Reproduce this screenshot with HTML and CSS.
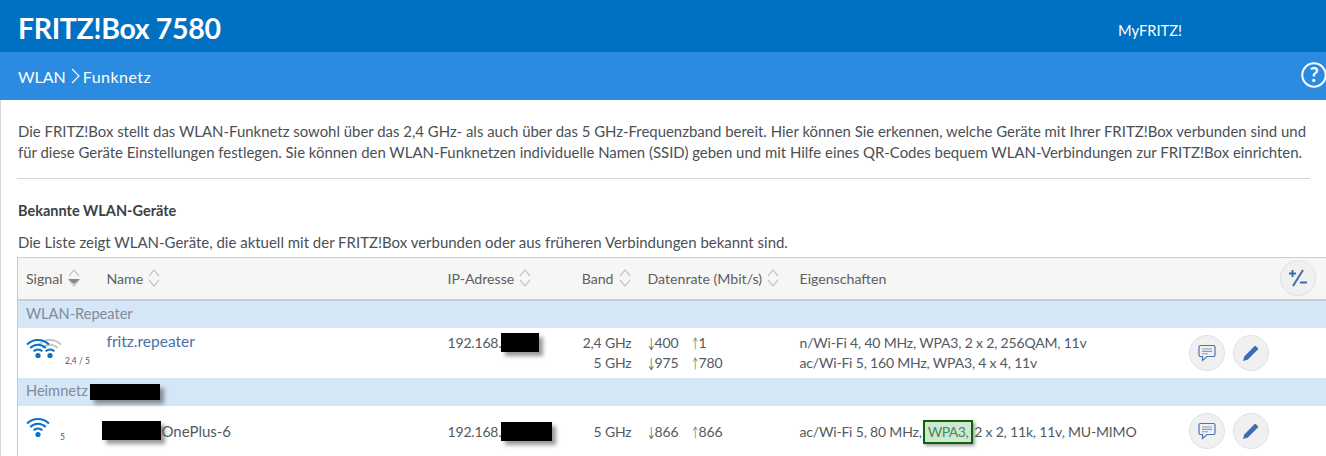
FILE: index.html
```html
<!DOCTYPE html>
<html lang="de">
<head>
<meta charset="utf-8">
<title>FRITZ!Box 7580</title>
<link rel="stylesheet" href="styles.css">
</head>
<body>
<svg class="defs" width="0" height="0" aria-hidden="true">
  <symbol id="wifi" viewBox="0 0 24 22">
    <path d="M1 7.5a15.5 15.5 0 0 1 22 0" fill="none" stroke="#0a70c8" stroke-width="2"/>
    <path d="M4.2 11a11 11 0 0 1 15.6 0" fill="none" stroke="#0a70c8" stroke-width="2"/>
    <path d="M7.6 14.4a6.2 6.2 0 0 1 8.8 0" fill="none" stroke="#0a70c8" stroke-width="2"/>
    <circle cx="12" cy="18.5" r="2.6" fill="#0a70c8"/>
  </symbol>
  <symbol id="wifi-low" viewBox="0 0 24 22">
    <path d="M1 7.5a15.5 15.5 0 0 1 22 0" fill="none" stroke="#c4c9cc" stroke-width="2"/>
    <path d="M4.2 11a11 11 0 0 1 15.6 0" fill="none" stroke="#c4c9cc" stroke-width="2"/>
    <path d="M7.6 14.4a6.2 6.2 0 0 1 8.8 0" fill="none" stroke="#0a70c8" stroke-width="2"/>
    <circle cx="12" cy="18.5" r="2.6" fill="#0a70c8"/>
  </symbol>
  <symbol id="sort" viewBox="0 0 14 20">
    <path d="M2 8l5-6 5 6M2 12l5 6 5-6" fill="none" stroke="#b4b8ba" stroke-width="1.1"/>
  </symbol>
  <symbol id="chat" viewBox="0 0 18 18">
    <path d="M2.5 1.5h13A1.5 1.5 0 0 1 17 3v8a1.5 1.5 0 0 1-1.5 1.5H9L4.5 16.5v-4h-2A1.5 1.5 0 0 1 1 11V3a1.5 1.5 0 0 1 1.5-1.5z" fill="none" stroke="#4a76b4" stroke-width="1.2"/>
    <path d="M4 5h10M4 7.4h10M4 9.8h6" stroke="#7f9fcb" stroke-width="1.1"/>
  </symbol>
  <symbol id="pen" viewBox="0 0 18 18">
    <path d="M1 17l1.3-4.6L12.6 2.1a.8.8 0 0 1 1.1 0l2.2 2.2a.8.8 0 0 1 0 1.1L5.6 15.7z" fill="#3f6cae"/>
  </symbol>
</svg>
<header class="top">
  <div class="brand">FRITZ!Box 7580</div>
  <a class="myfritz">MyFRITZ!</a>
</header>
<nav class="crumbs">
  <span class="crumb-text">WLAN</span>
  <svg class="crumb-sep" viewBox="0 0 9 16" width="9" height="16"><path d="M1 1l7 7-7 7" fill="none" stroke="#fff" stroke-width="1.1"/></svg>
  <span class="crumb-text crumb-page">Funknetz</span>
  <svg class="help" viewBox="0 0 26 26" width="26" height="26"><circle cx="13" cy="13" r="11.7" fill="none" stroke="#fff" stroke-width="2"/><text x="13" y="19.5" text-anchor="middle" class="help-q">?</text></svg>
</nav>
<main class="content">
  <p class="intro">Die FRITZ!Box stellt das WLAN-Funknetz sowohl über das 2,4 GHz- als auch über das 5 GHz-Frequenzband bereit. Hier können Sie erkennen, welche Geräte mit Ihrer FRITZ!Box verbunden sind und für diese Geräte Einstellungen festlegen. Sie können den WLAN-Funknetzen individuelle Namen (SSID) geben und mit Hilfe eines QR-Codes bequem WLAN-Verbindungen zur FRITZ!Box einrichten.</p>
  <hr class="rule">
  <h2 class="section-title">Bekannte WLAN-Geräte</h2>
  <p class="section-text">Die Liste zeigt WLAN-Geräte, die aktuell mit der FRITZ!Box verbunden oder aus früheren Verbindungen bekannt sind.</p>
  <table class="devices">
    <colgroup>
      <col class="c-signal"><col class="c-name"><col class="c-ip"><col class="c-band"><col class="c-rate"><col class="c-props"><col class="c-act">
    </colgroup>
    <thead>
      <tr>
        <th><span class="th-in">Signal <span class="sort-active"><svg width="14" height="20"><use href="#sort"/></svg></span></span></th>
        <th><span class="th-in">Name <svg width="14" height="20"><use href="#sort"/></svg></span></th>
        <th><span class="th-in">IP-Adresse <svg width="14" height="20"><use href="#sort"/></svg></span></th>
        <th class="right"><span class="th-in">Band <svg width="14" height="20"><use href="#sort"/></svg></span></th>
        <th><span class="th-in">Datenrate (Mbit/s) <svg width="14" height="20"><use href="#sort"/></svg></span></th>
        <th>Eigenschaften</th>
        <th class="act-head"><button class="round" aria-label="Mehr"><svg viewBox="0 0 20 20" width="20" height="20"><path d="M1 5.5h7M4.5 2v7M15 2L5 18M12 14.5h7" fill="none" stroke="#3f6cae" stroke-width="2"/></svg></button></th>
      </tr>
    </thead>
    <tbody>
      <tr class="group"><td colspan="7">WLAN-Repeater</td></tr>
      <tr class="dev">
        <td class="sig"><span class="sig-in"><svg class="w2" width="24" height="22"><use href="#wifi-low"/></svg><svg class="w1" width="24" height="22"><use href="#wifi"/></svg><small class="sig-num">2,4 / 5</small></span></td>
        <td class="name"><a>fritz.repeater</a></td>
        <td>192.168.<i class="redact r1"></i></td>
        <td class="right">2,4 GHz<br>5 GHz</td>
        <td><span class="rate"><span class="r-d"><b>↓</b>400</span><span><em>↑</em>1</span></span><span class="rate"><span class="r-d"><b>↓</b>975</span><span><em>↑</em>780</span></span></td>
        <td>n/Wi-Fi 4, 40 MHz, WPA3, 2 x 2, 256QAM, 11v<br>ac/Wi-Fi 5, 160 MHz, WPA3, 4 x 4, 11v</td>
        <td class="acts"><span class="act-in"><button class="round" aria-label="Nachricht"><svg width="18" height="18"><use href="#chat"/></svg></button><button class="round" aria-label="Bearbeiten"><svg width="18" height="18"><use href="#pen"/></svg></button></span></td>
      </tr>
      <tr class="group"><td colspan="7">Heimnetz <i class="redact r2"></i></td></tr>
      <tr class="dev mid">
        <td class="sig"><span class="sig-in one"><svg class="w1" width="24" height="22"><use href="#wifi"/></svg><small class="sig-num">5</small></span></td>
        <td class="name plain"><i class="redact r3"></i>OnePlus-6</td>
        <td>192.168.<i class="redact r4"></i></td>
        <td class="right">5 GHz</td>
        <td><span class="rate"><span class="r-d"><b>↓</b>866</span><span><em>↑</em>866</span></span></td>
        <td>ac/Wi-Fi 5, 80 MHz,<mark class="hl">WPA3,</mark>2 x 2, 11k, 11v, MU-MIMO</td>
        <td class="acts"><span class="act-in"><button class="round" aria-label="Nachricht"><svg width="18" height="18"><use href="#chat"/></svg></button><button class="round" aria-label="Bearbeiten"><svg width="18" height="18"><use href="#pen"/></svg></button></span></td>
      </tr>
    </tbody>
  </table>
</main>
</body>
</html>
```
FILE: styles.css
```css
* { box-sizing: border-box; }
html, body { margin: 0; height: 456px; overflow: hidden; background: #fff; }
body { font-family: "Lato", "Liberation Sans", sans-serif; font-size: 15px; color: #4a4f55; }
.defs { position: absolute; }
.top { height: 52px; background: #0070c2; color: #fff; display: flex; align-items: center; justify-content: space-between; padding: 0 144px 0 18px; }
.brand { font-size: 28.5px; font-weight: 700; letter-spacing: -0.35px; padding-top: 4px; }
.myfritz { font-size: 14.7px; padding-top: 8px; }
.crumbs { height: 48px; background: #2b8be0; color: #fff; display: flex; align-items: center; padding: 0 0 0 18px; font-size: 16px; }
.crumb-sep { margin: 0 3px 0 5px; }
.crumb-page { letter-spacing: .45px; }
.help { margin: -2px -1px 0 auto; }
.help-q { font: 700 20px "Lato", sans-serif; fill: #fff; }
.content { padding: 0 0 0 16px; border-left: 1px solid #d8d8d2; height: 356px; overflow: hidden; }
.intro { margin: 0; padding: 21px 0 0 1px; font-size: 14.93px; line-height: 21px; width: 1296px; }
.rule { margin: 15px 0 0 0; border: 0; border-top: 1px solid #d4d4d4; width: 1293px; }
.section-title { margin: 23px 0 0 1px; font-size: 14.5px; line-height: 18px; font-weight: 700; color: #3c4045; }
.section-text { margin: 12px 0 0 1px; font-size: 14.97px; line-height: 20px; }
.devices { margin-top: 5px; width: 1309px; border-collapse: collapse; table-layout: fixed; border-right: 1px solid #c5d3df; border-left: 1px solid #b9cad9; font-size: 14px; letter-spacing: -0.18px; }
.c-signal { width: 80px; } .c-name { width: 342px; } .c-ip { width: 120px; } .c-band { width: 72px; } .c-rate { width: 152px; } .c-props { width: 385px; } .c-act { width: 158px; }
thead tr { height: 42px; background: #f6f6f4; border-top: 1px solid #c8ced2; border-bottom: 2px solid #c1d0dc; }
th { text-align: left; font-weight: 400; color: #5b6066; padding: 0 0 0 8px; vertical-align: middle; font-size: 14.15px; letter-spacing: 0; white-space: nowrap; }
.th-in { display: inline-flex; align-items: center; gap: 4px; }
th.right, td.right { text-align: right; padding-right: 0; }
th:nth-child(2), td:nth-child(2) { padding-left: 9px; }
th:nth-child(5), td:nth-child(5) { padding-left: 16px; }
th:nth-child(6), td:nth-child(6) { padding-left: 16px; }
.sort-active { display: inline-flex; position: relative; }
.sort-active::after { content: ""; position: absolute; left: 1px; top: 11px; width: 0; height: 0; border: 6px solid transparent; border-top: 5px solid #82878b; }
.act-head { text-align: right; padding: 0 10px 0 0; }
.group td { height: 28px; background: #d5e6f6; color: #7f8c9a; padding: 3px 0 0 8px; font-size: 14.6px; letter-spacing: 0; }
td { padding: 0 0 0 8px; vertical-align: top; line-height: 20px; color: #54595f; white-space: nowrap; }
.dev td { height: 50px; padding-top: 5px; }
.dev td.right { padding-left: 0; }
.mid td { padding-top: 16px; }
.name { font-size: 15px; letter-spacing: 0; }
.dev .name { padding-top: 3px; }
.dev.mid .name { padding-top: 15px; }
.name a { color: #4a6fa5; font-size: 15.5px; }
.sig-in { display: block; position: relative; height: 30px; }
.sig-in .w1 { position: absolute; left: 0; top: 4px; }
.sig-in .w2 { position: absolute; left: 12px; top: 4px; }
.sig-num { position: absolute; left: 39px; top: 22px; font-size: 8.5px; line-height: 12px; color: #555; letter-spacing: 0; }
.sig-in.one { margin-top: -10px; }
.sig-in.one .sig-num { left: 34px; top: 19px; }
.rate { display: block; }
.r-d { display: inline-block; width: 44px; }
.rate b, .rate em { display: inline-block; width: 7px; font-weight: 400; font-style: normal; transform: scaleX(.6); transform-origin: left center; }
.rate b { color: #5b6066; }
.rate em { color: #3f9a70; }
.redact { display: inline-block; background: #000; box-shadow: 4px 4px 4px rgba(70,70,70,.55); vertical-align: top; }
.r1 { width: 38px; height: 19px; }
.r2 { width: 70px; height: 16px; vertical-align: -4px; margin-left: -2px; }
.r3 { width: 59px; height: 19px; margin-left: -5px; margin-right: 1px; }
.r4 { width: 51px; height: 19px; }
.hl { background: #cfe8cf; color: #3e8a62; border: 2px solid #0a640a; box-shadow: 2px 2px 3px rgba(70,70,70,.5); padding: 0 3px; margin: -2px 1px; display: inline-block; line-height: 20px; vertical-align: top; letter-spacing: -0.5px; }
.round { width: 36px; height: 36px; border-radius: 50%; border: 1px solid #dde1e4; background: #f0f0f0; padding: 0; display: inline-flex; align-items: center; justify-content: center; }
.acts { padding-left: 0; text-align: left; }
.act-in { display: flex; gap: 8px; padding-left: 20px; }
.dev .acts { padding-top: 7px; }
.mid .acts { padding-top: 7px; }
```
